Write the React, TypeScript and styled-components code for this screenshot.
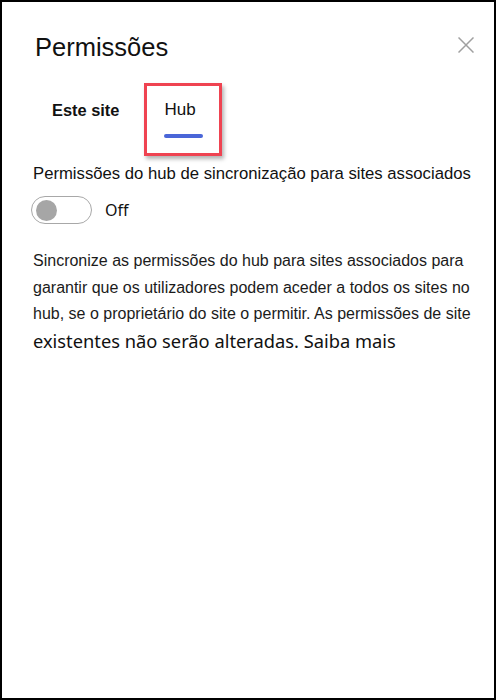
import React, { useState } from "react";
import styled, { createGlobalStyle } from "styled-components";

const GlobalStyle = createGlobalStyle`
  html, body {
    margin: 0;
    padding: 0;
    background: #fff;
  }
  * {
    box-sizing: border-box;
  }
`;

const App: React.FC = () => {
  const [tab, setTab] = useState("hub");
  const [sync, setSync] = useState(false);

  return (
    <>
      <GlobalStyle />
      <Panel>
        <Header>
          <Title>Permissões</Title>
          <CloseButton aria-label="Fechar">
            <svg width="16" height="16" viewBox="0 0 16 16">
              <path d="M0.5 0.5 L15.5 15.5 M15.5 0.5 L0.5 15.5" stroke="#a0a0a0" strokeWidth="1.5" fill="none" />
            </svg>
          </CloseButton>
        </Header>

        <Tabs>
          <Tab $active={tab === "site"} onClick={() => setTab("site")}>
            Este site
          </Tab>
          <Highlight>
            <Tab $active={tab === "hub"} onClick={() => setTab("hub")}>
              Hub
            </Tab>
          </Highlight>
        </Tabs>

        <Label>Permissões do hub de sincronização para sites associados</Label>
        <ToggleRow>
          <Toggle $on={sync} onClick={() => setSync(!sync)}>
            <Knob $on={sync} />
          </Toggle>
          <ToggleText>{sync ? "On" : "Off"}</ToggleText>
        </ToggleRow>

        <Description>
          Sincronize as permissões do hub para sites associados para garantir que os
          utilizadores podem aceder a todos os sites no hub, se o proprietário do site o
          permitir. As permissões de site
          <Big>existentes não serão alteradas. Saiba mais</Big>
        </Description>
      </Panel>
    </>
  );
};

export default App;

const Panel = styled.div`
  width: 496px;
  height: 700px;
  border: 2px solid #000;
  background: #fff;
  padding: 29px 20px 0 31px;
  font-family: "Liberation Sans", Arial, sans-serif;
  color: #1b1b1b;
`;

const Header = styled.div`
  display: flex;
  justify-content: space-between;
  align-items: flex-start;
`;

const Title = styled.h1`
  margin: 0 0 0 2px;
  font-size: 25.5px;
  font-weight: 400;
  line-height: 32px;
  color: #111;
`;

const CloseButton = styled.button`
  display: flex;
  background: none;
  border: none;
  padding: 0;
  margin-top: 6px;
  cursor: pointer;
`;

const Tabs = styled.div`
  display: flex;
  align-items: flex-start;
  margin-top: 20px;
  padding-left: 19px;
  gap: 25px;
`;

const Highlight = styled.div`
  width: 78px;
  height: 73px;
  border: 3px solid #ef4351;
  box-shadow: 2px 3px 4px rgba(0, 0, 0, 0.3);
  padding: 14px 0 0 17px;
`;

const Tab = styled.button<{ $active: boolean }>`
  background: none;
  border: none;
  padding: 0;
  margin-top: 17px;
  font-family: "Liberation Sans", Arial, sans-serif;
  font-size: ${(p) => (p.$active ? "17px" : "16.4px")};
  font-weight: ${(p) => (p.$active ? 400 : 700)};
  color: #111;
  cursor: pointer;
  line-height: 20px;
  text-align: left;

  ${Highlight} & {
    margin-top: 0;
  }

  &::after {
    content: "";
    display: ${(p) => (p.$active ? "block" : "none")};
    width: 39px;
    height: 4px;
    margin-top: 14px;
    border-radius: 2px;
    background: #4a66d8;
  }
`;

const Label = styled.div`
  margin-top: 8px;
  font-size: 16.7px;
  line-height: 20px;
  color: #111;
  white-space: nowrap;
`;

const ToggleRow = styled.div`
  display: flex;
  align-items: center;
  gap: 13px;
  margin-top: 12px;
  margin-left: -2px;
`;

const Toggle = styled.button<{ $on: boolean }>`
  width: 61px;
  height: 28px;
  border-radius: 14px;
  border: 1px solid #a8a8a8;
  background: ${(p) => (p.$on ? "#4a66d8" : "#fff")};
  padding: 0 4px;
  display: flex;
  align-items: center;
  justify-content: ${(p) => (p.$on ? "flex-end" : "flex-start")};
  cursor: pointer;
`;

const Knob = styled.span<{ $on: boolean }>`
  width: 21px;
  height: 21px;
  border-radius: 50%;
  background: ${(p) => (p.$on ? "#fff" : "#a6a6a6")};
`;

const ToggleText = styled.span`
  font-family: "Noto Sans", "Liberation Sans", sans-serif;
  font-size: 16px;
  color: #111;
`;

const Description = styled.p`
  margin: 24px 0 0;
  font-size: 16px;
  line-height: 26.5px;
  color: #1b1b1b;
`;

const Big = styled.span`
  display: block;
  font-family: "Noto Sans", "Liberation Sans", sans-serif;
  font-size: 18.3px;
  line-height: 26px;
  color: #111;
`;
